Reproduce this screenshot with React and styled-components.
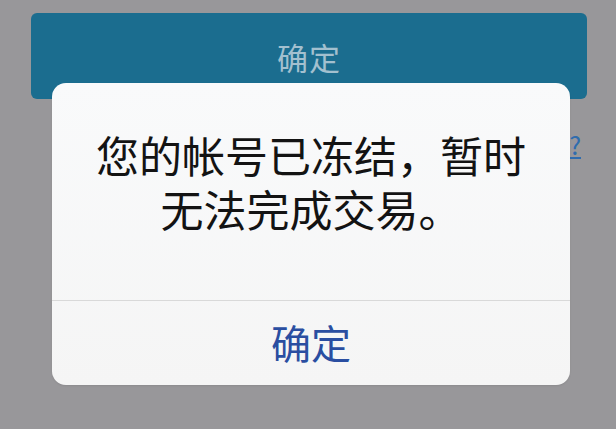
import React from "react";
import styled, { createGlobalStyle } from "styled-components";

const GlobalStyle = createGlobalStyle`
  html, body {
    margin: 0;
    padding: 0;
    background: #98979a;
  }
  body {
    font-family: "Noto Sans CJK SC", "Noto Sans", sans-serif;
  }
`;

const Screen = styled.div`
  position: relative;
  width: 616px;
  height: 429px;
  overflow: hidden;
  background: #98979a;
  box-sizing: border-box;
  padding: 13px 29px 0 31px;
`;

const ConfirmBar = styled.div`
  height: 86px;
  border-radius: 6px;
  background: #1b6d8f;
  display: flex;
  align-items: center;
  justify-content: center;
  color: #a3c0cf;
  font-size: 31px;
  letter-spacing: 1px;
`;

const LinkRow = styled.div`
  display: flex;
  justify-content: flex-end;
  margin-top: 33px;
  padding-right: 6px;
`;

const HelpLink = styled.span`
  color: #2f6cae;
  font-size: 25px;
  text-decoration: underline;
  line-height: 1;
`;

const Overlay = styled.div`
  position: absolute;
  left: 52px;
  top: 83px;
  width: 518px;
`;

const Dialog = styled.div`
  border-radius: 14px;
  background: linear-gradient(#f9fafb, #f5f5f5);
  overflow: hidden;
  box-shadow: 0 1px 2px rgba(0, 0, 0, 0.08);
`;

const Message = styled.div`
  height: 217px;
  box-sizing: border-box;
  padding-top: 44px;
  text-align: center;
  color: #131313;
  font-size: 43px;
  line-height: 54px;
  font-weight: 400;
`;

const Divider = styled.div`
  height: 1px;
  background: #d9d9d9;
`;

const DialogButton = styled.div`
  height: 84px;
  display: flex;
  align-items: center;
  justify-content: center;
  color: #2a4ea1;
  font-size: 40px;
  font-weight: 400;
  padding-bottom: 2px;
  box-sizing: border-box;
`;

export default function App() {
  return (
    <>
      <GlobalStyle />
      <Screen>
        <ConfirmBar>确定</ConfirmBar>
        <LinkRow>
          <HelpLink>?</HelpLink>
        </LinkRow>
        <Overlay>
          <Dialog>
            <Message>
              您的帐号已冻结，暂时
              <br />
              无法完成交易。
            </Message>
            <Divider />
            <DialogButton>确定</DialogButton>
          </Dialog>
        </Overlay>
      </Screen>
    </>
  );
}
